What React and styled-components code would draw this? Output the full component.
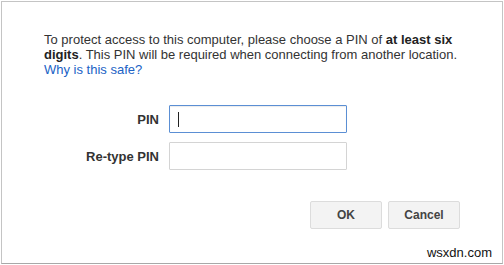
import styled, { createGlobalStyle } from "styled-components";

const GlobalStyle = createGlobalStyle`
  html, body {
    margin: 0;
    padding: 0;
    background: #ffffff;
  }
  body {
    font-family: "Liberation Sans", Arial, sans-serif;
  }
`;

const App = () => {
  return (
    <>
      <GlobalStyle />
      <Dialog>
        <Message>
          To protect access to this computer, please choose a PIN of{" "}
          <strong>at least six digits</strong>. This PIN will be required when
          connecting from another location.
          <br />
          <a href="#">Why is this safe?</a>
        </Message>
        <Form>
          <Label htmlFor="pin">PIN</Label>
          <Field>
            <Input id="pin" type="password" $focused />
            <Caret />
          </Field>
          <Label htmlFor="pin2">Re-type PIN</Label>
          <Field>
            <Input id="pin2" type="password" />
          </Field>
        </Form>
        <Actions>
          <Button>OK</Button>
          <Button>Cancel</Button>
        </Actions>
        <Footer>wsxdn.com</Footer>
      </Dialog>
    </>
  );
};

const Dialog = styled.div`
  box-sizing: border-box;
  margin: 1px 0 0 1px;
  width: 502px;
  height: 263px;
  border: 1px solid #c4c4c4;
  border-bottom-color: #a8a8a8;
  background: #fff;
  padding: 30px 42px 0 42px;
  display: flex;
  flex-direction: column;
`;

const Message = styled.p`
  margin: 0;
  font-size: 13px;
  line-height: 15px;
  color: #333;

  strong {
    font-weight: bold;
    color: #222;
  }

  a {
    color: #2062c5;
    text-decoration: none;
  }
`;

const Form = styled.div`
  margin-top: 28px;
  display: grid;
  grid-template-columns: 115px 178px;
  column-gap: 10px;
  row-gap: 9px;
  align-items: center;
`;

const Label = styled.label`
  text-align: right;
  font-size: 13px;
  font-weight: bold;
  color: #333;
`;

const Field = styled.div`
  position: relative;
  height: 28px;
`;

const Input = styled.input`
  box-sizing: border-box;
  width: 100%;
  height: 28px;
  margin: 0;
  padding: 0 8px;
  border: 1px solid ${(props) => (props.$focused ? "#5b8fd4" : "#d4d4d4")};
  box-shadow: ${(props) =>
    props.$focused ? "inset 0 1px 1px rgba(0,0,0,0.08)" : "none"};
  border-radius: 1px;
  outline: none;
  background: #fff;
  font-family: inherit;
  font-size: 13px;
`;

const Caret = styled.span`
  position: absolute;
  left: 9px;
  top: 7px;
  width: 1px;
  height: 15px;
  background: #222;
`;

const Actions = styled.div`
  margin-top: 31px;
  display: flex;
  justify-content: flex-end;
  gap: 6px;
`;

const Button = styled.button`
  box-sizing: border-box;
  width: 72px;
  height: 28px;
  margin: 0;
  border: 1px solid #dcdcdc;
  border-radius: 2px;
  background: #f3f3f3;
  color: #444;
  font-family: inherit;
  font-size: 12px;
  font-weight: bold;
  cursor: pointer;
`;

const Footer = styled.div`
  margin: 16px -32px 0 0;
  text-align: right;
  font-size: 13px;
  color: #111;
`;

export default App;
